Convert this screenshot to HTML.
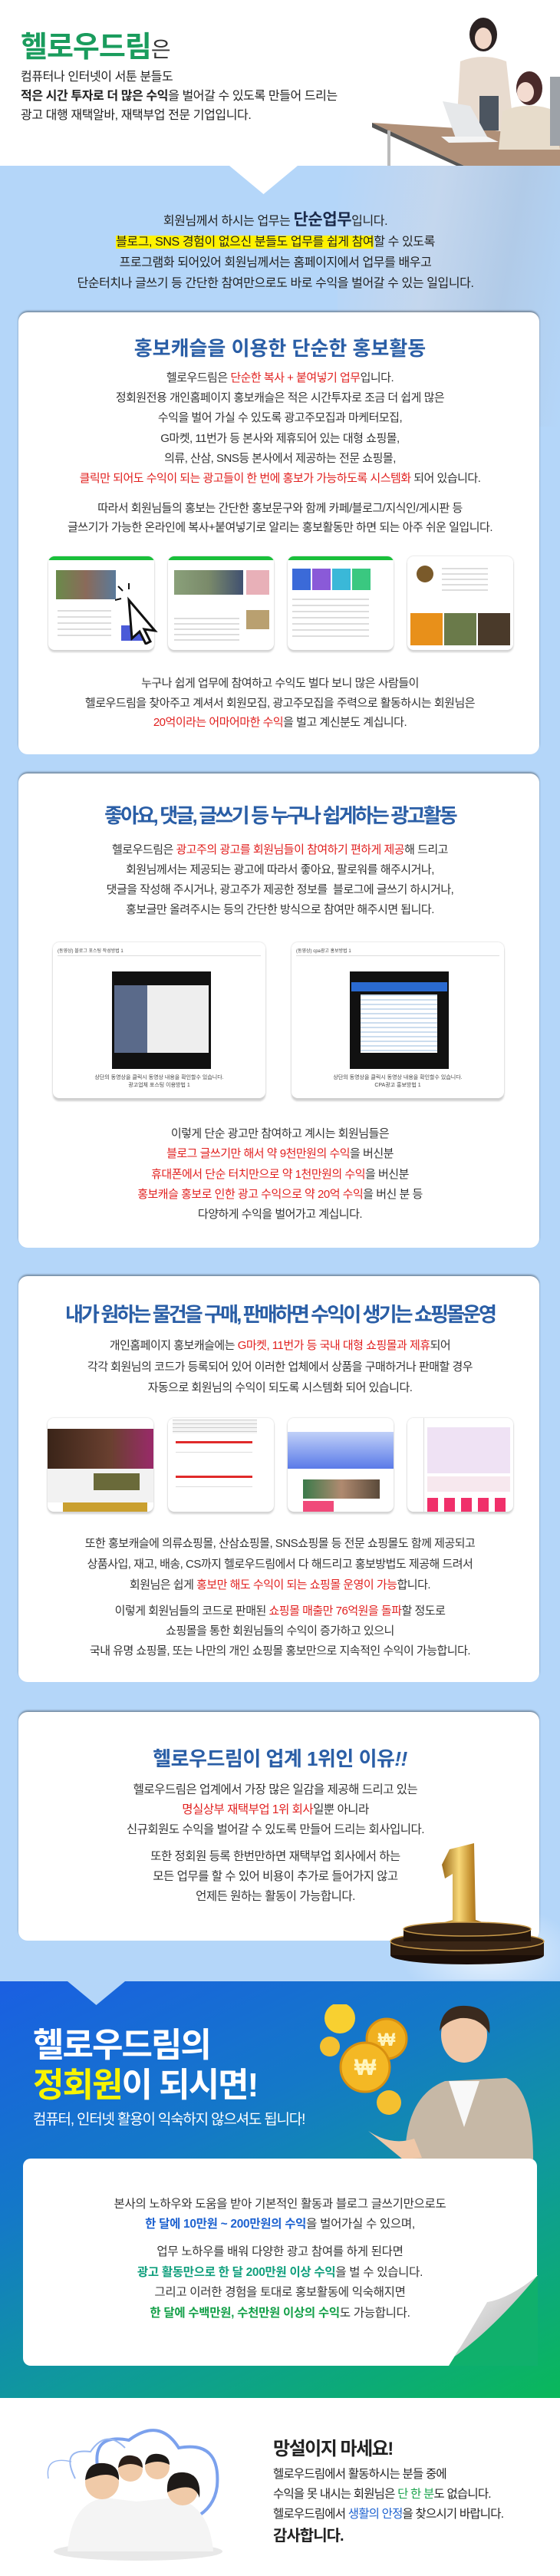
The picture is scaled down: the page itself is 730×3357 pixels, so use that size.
<!DOCTYPE html>
<html><head><meta charset="utf-8">
<style>
*{margin:0;padding:0;box-sizing:border-box}
body{width:730px;height:3357px;position:relative;background:#fff;font-family:"Liberation Sans","Noto Sans CJK KR",sans-serif;color:#222;overflow:hidden}
.a{position:absolute}
.c{position:absolute;left:0;width:730px;text-align:center;white-space:nowrap}
.r{color:#e1201f}
.card{position:absolute;left:24px;width:679px;background:#fff;border-radius:12px;box-shadow:0 -2px 2px rgba(0,0,0,.35)}
.t{font-size:26px;font-weight:bold;color:#2a5ea6;line-height:32px;letter-spacing:-1px}
.p{font-size:15px;letter-spacing:-0.5px;color:#333}
.shot{position:absolute;width:138px;height:122px;background:#fff;border-radius:8px;box-shadow:0 3px 2px #d4d4d4,0 0 2px #ccc;overflow:hidden}
.shot i{position:absolute;display:block}
</style></head><body>

<!-- top section -->
<div class="a" style="left:27px;top:39px;font-size:38px;font-weight:bold;color:#1a9c5d;letter-spacing:-1px;line-height:46px">헬로우드림<span style="color:#333;font-size:28px;font-weight:normal">은</span></div>
<div class="a" style="left:27px;top:88px;font-size:16px;line-height:25px;color:#222;letter-spacing:-0.4px">컴퓨터나 인터넷이 서툰 분들도<br><b>적은 시간 투자로 더 많은 수익</b>을 벌어갈 수 있도록 만들어 드리는<br>광고 대행 재택알바, 재택부업 전문 기업입니다.</div>

<!-- office image -->
<svg class="a" style="left:485px;top:20px" width="245" height="196" viewBox="0 0 245 196">
 <polygon points="0,140 160,150 245,160 245,196 120,196" fill="#b09078"/>
 <polygon points="0,140 120,196 110,196 0,146" fill="#555"/>
 <rect x="20" y="150" width="4" height="46" fill="#bbb"/>
 <ellipse cx="145" cy="25" rx="18" ry="22" fill="#2b2222"/>
 <ellipse cx="145" cy="30" rx="11" ry="14" fill="#f1d7c8"/>
 <path d="M115 60 Q145 48 175 60 L185 150 L110 150 Z" fill="#e8dbcf"/>
 <rect x="140" y="105" width="25" height="45" fill="#4c5560"/>
 <ellipse cx="205" cy="95" rx="17" ry="22" fill="#4a2a2a"/>
 <ellipse cx="200" cy="100" rx="11" ry="13" fill="#f3dbd0"/>
 <path d="M170 125 Q205 110 240 125 L245 175 L165 175 Z" fill="#e7dccb"/>
 <rect x="232" y="80" width="13" height="90" fill="#9da2a8"/>
 <polygon points="92,112 128,118 150,158 110,163" fill="#e6e8ea"/>
 <polygon points="90,158 150,158 165,165 100,166" fill="#f4f4f4"/>
</svg>

<!-- blue section -->
<div class="a" style="left:0;top:216px;width:730px;height:2366px;background:#b4d6f9"></div>
<div class="a" style="left:440px;top:216px;width:290px;height:340px;background:linear-gradient(100deg,rgba(180,214,249,0) 0%,rgba(200,215,235,.8) 40%,rgba(175,195,220,.6) 70%,rgba(180,214,249,0) 100%)"></div>
<svg class="a" style="left:299px;top:216px" width="89" height="37"><polygon points="0,0 89,0 44.5,37" fill="#fff"/></svg>

<div class="c" style="top:273px;font-size:16px;line-height:27px;color:#222;letter-spacing:-0.4px;left:-6px">
회원님께서 하시는 업무는 <b style="font-size:21px;color:#1b2a4a">단순업무</b>입니다.<br>
<span style="background:#fff200">블로그, SNS 경험이 없으신 분들도 업무를 쉽게 참여</span>할 수 있도록<br>
프로그램화 되어있어 회원님께서는 홈페이지에서 업무를 배우고<br>
단순터치나 글쓰기 등 간단한 참여만으로도 바로 수익을 벌어갈 수 있는 일입니다.</div>

<!-- card 1 -->
<div class="card" style="top:407px;height:576px"></div>
<div class="c t" style="top:438px;letter-spacing:0">홍보캐슬을 이용한 단순한 홍보활동</div>
<div class="c p" style="top:480px;line-height:26.2px">헬로우드림은 <span class="r">단순한 복사 + 붙여넣기 업무</span>입니다.<br>정회원전용 개인홈페이지 홍보캐슬은 적은 시간투자로 조금 더 쉽게 많은<br>수익을 벌어 가실 수 있도록 광고주모집과 마케터모집,<br>G마켓, 11번가 등 본사와 제휴되어 있는 대형 쇼핑몰,<br>의류, 산삼, SNS등 본사에서 제공하는 전문 쇼핑몰,<br><span class="r">클릭만 되어도 수익이 되는 광고들이 한 번에 홍보가 가능하도록 시스템화</span> 되어 있습니다.</div>
<div class="c p" style="top:650px;line-height:25px">따라서 회원님들의 홍보는 간단한 홍보문구와 함께 카페/블로그/지식인/게시판 등<br>글쓰기가 가능한 온라인에 복사+붙여넣기로 알리는 홍보활동만 하면 되는 아주 쉬운 일입니다.</div>

<div class="shot" style="left:63px;top:725px"><i style="left:0;top:0;width:138px;height:5px;background:#19c03a"></i><i style="left:10px;top:18px;width:78px;height:38px;background:linear-gradient(90deg,#6a8a4a,#8a6a5a,#5a7a9a)"></i><i style="left:12px;top:70px;width:70px;height:40px;background:repeating-linear-gradient(180deg,#ddd 0 2px,#fff 2px 8px)"></i><i style="left:95px;top:90px;width:30px;height:20px;background:#4a5ad8"></i></div>
<div class="shot" style="left:219px;top:725px"><i style="left:0;top:0;width:138px;height:5px;background:#19c03a"></i><i style="left:8px;top:18px;width:90px;height:32px;background:linear-gradient(90deg,#8aa07a,#7a8a6a,#405070)"></i><i style="left:102px;top:18px;width:30px;height:32px;background:#e8b0b8"></i><i style="left:102px;top:70px;width:30px;height:25px;background:#b9a070"></i><i style="left:8px;top:80px;width:85px;height:30px;background:repeating-linear-gradient(180deg,#ddd 0 2px,#fff 2px 7px)"></i></div>
<div class="shot" style="left:375px;top:725px"><i style="left:0;top:0;width:138px;height:5px;background:#19c03a"></i><i style="left:6px;top:16px;width:24px;height:28px;background:#3b6ad8"></i><i style="left:32px;top:16px;width:24px;height:28px;background:#8a5ad8"></i><i style="left:58px;top:16px;width:24px;height:28px;background:#3ab8d8"></i><i style="left:84px;top:16px;width:24px;height:28px;background:#3ac880"></i><i style="left:6px;top:55px;width:100px;height:50px;background:repeating-linear-gradient(180deg,#ddd 0 2px,#fff 2px 8px)"></i></div>
<div class="shot" style="left:531px;top:725px"><i style="left:12px;top:12px;width:22px;height:22px;border-radius:50%;background:#7a5a2a"></i><i style="left:45px;top:15px;width:60px;height:30px;background:repeating-linear-gradient(180deg,#ddd 0 2px,#fff 2px 7px)"></i><i style="left:4px;top:74px;width:42px;height:42px;background:#e8901a"></i><i style="left:48px;top:74px;width:42px;height:42px;background:#6a7a4a"></i><i style="left:92px;top:74px;width:42px;height:42px;background:#4a3a2a"></i></div>
<svg class="a" style="left:150px;top:760px" width="75" height="80"><path d="M18 22 L52 62 L38 60 L46 76 L40 79 L32 63 L22 72 Z" fill="#fff" stroke="#111" stroke-width="3"/><path d="M10 10 L4 4 M18 8 L18 0 M8 20 L0 22" stroke="#111" stroke-width="2"/></svg>

<div class="c p" style="top:878px;line-height:25.5px">누구나 쉽게 업무에 참여하고 수익도 벌다 보니 많은 사람들이<br>헬로우드림을 찾아주고 계셔서 회원모집, 광고주모집을 주력으로 활동하시는 회원님은<br><span class="r">20억이라는 어마어마한 수익</span>을 벌고 계신분도 계십니다.</div>

<!-- card 2 -->
<div class="card" style="top:1008px;height:618px"></div>
<div class="c t" style="top:1047px;letter-spacing:-2.8px">좋아요, 댓글, 글쓰기 등 누구나 쉽게하는 광고활동</div>
<div class="c p" style="top:1095px;line-height:26px">헬로우드림은 <span class="r">광고주의 광고를 회원님들이 참여하기 편하게 제공</span>해 드리고<br>회원님께서는 제공되는 광고에 따라서 좋아요, 팔로워를 해주시거나,<br>댓글을 작성해 주시거나, 광고주가 제공한 정보를 &nbsp;블로그에 글쓰기 하시거나,<br>홍보글만 올려주시는 등의 간단한 방식으로 참여만 해주시면 됩니다.</div>

<div class="a" style="left:69px;top:1228px;width:277px;height:203px;background:#fff;border-radius:8px;box-shadow:0 4px 2px #d0d0d0,0 0 2px #ccc">
 <div class="a" style="left:6px;top:6px;width:265px;height:12px;border-bottom:1px solid #ddd;font-size:6px;color:#444">(동영상) 블로그 포스팅 작성방법 1</div>
 <div class="a" style="left:77px;top:38px;width:129px;height:127px;background:#111"></div>
 <div class="a" style="left:80px;top:56px;width:123px;height:88px;background:linear-gradient(90deg,#5a6a8a 0 35%,#eee 35%)"></div>
 <div class="a" style="left:0;top:172px;width:277px;text-align:center;font-size:7px;color:#444;line-height:10px">상단의 동영상을 클릭시 동영상 내용을 확인할수 있습니다.<br>광고업체 포스팅 이용방법 1</div>
</div>
<div class="a" style="left:380px;top:1228px;width:277px;height:203px;background:#fff;border-radius:8px;box-shadow:0 4px 2px #d0d0d0,0 0 2px #ccc">
 <div class="a" style="left:6px;top:6px;width:265px;height:12px;border-bottom:1px solid #ddd;font-size:6px;color:#444">(동영상) cpa광고 홍보방법 1</div>
 <div class="a" style="left:76px;top:38px;width:129px;height:127px;background:#111"></div>
 <div class="a" style="left:78px;top:52px;width:125px;height:12px;background:#2a6ad0"></div>
 <div class="a" style="left:90px;top:68px;width:100px;height:76px;background:repeating-linear-gradient(180deg,#cde 0 2px,#fff 2px 6px)"></div>
 <div class="a" style="left:0;top:172px;width:277px;text-align:center;font-size:7px;color:#444;line-height:10px">상단의 동영상을 클릭시 동영상 내용을 확인할수 있습니다.<br>CPA광고 홍보방법 1</div>
</div>

<div class="c p" style="top:1465px;line-height:26.3px">이렇게 단순 광고만 참여하고 계시는 회원님들은<br><span class="r">블로그 글쓰기만 해서 약 9천만원의 수익</span>을 버신분<br><span class="r">휴대폰에서 단순 터치만으로 약 1천만원의 수익</span>을 버신분<br><span class="r">홍보캐슬 홍보로 인한 광고 수익으로 약 20억 수익</span>을 버신 분 등<br>다양하게 수익을 벌어가고 계십니다.</div>

<!-- card 3 -->
<div class="card" style="top:1663px;height:529px"></div>
<div class="c t" style="top:1697px;letter-spacing:-2.9px">내가 원하는 물건을 구매, 판매하면 수익이 생기는 쇼핑몰운영</div>
<div class="c p" style="top:1740px;line-height:27.5px">개인홈페이지 홍보캐슬에는 <span class="r">G마켓, 11번가 등 국내 대형 쇼핑몰과 제휴</span>되어<br>각각 회원님의 코드가 등록되어 있어 이러한 업체에서 상품을 구매하거나 판매할 경우<br>자동으로 회원님의 수익이 되도록 시스템화 되어 있습니다.</div>

<div class="shot" style="left:62px;top:1848px"><i style="left:0;top:14px;width:138px;height:52px;background:linear-gradient(90deg,#3a2418,#6a4030 60%,#9a2a6a)"></i><i style="left:0;top:66px;width:138px;height:44px;background:#f2f2f2"></i><i style="left:60px;top:72px;width:60px;height:22px;background:#6a6a3a"></i><i style="left:20px;top:110px;width:110px;height:12px;background:#caa030"></i></div>
<div class="shot" style="left:219px;top:1848px"><i style="left:6px;top:2px;width:110px;height:18px;background:repeating-linear-gradient(180deg,#ccc 0 1px,#f4f4f4 1px 5px)"></i><i style="left:10px;top:30px;width:100px;height:88px;background:repeating-linear-gradient(180deg,#e02a2a 0 3px,#fff 3px 14px,#ddd 14px 15px,#fff 15px 45px)"></i></div>
<div class="shot" style="left:375px;top:1848px"><i style="left:0;top:18px;width:138px;height:48px;background:linear-gradient(180deg,#c0d0f8,#5a7ae8)"></i><i style="left:20px;top:80px;width:100px;height:25px;background:linear-gradient(90deg,#3a7a4a,#b08a70,#5a4a3a)"></i><i style="left:20px;top:108px;width:40px;height:14px;background:#f04a7a"></i></div>
<div class="shot" style="left:531px;top:1848px"><i style="left:2px;top:0;width:20px;height:122px;background:#fff;border-right:1px solid #ddd"></i><i style="left:26px;top:12px;width:108px;height:60px;background:#efe2f4"></i><i style="left:26px;top:76px;width:108px;height:20px;background:#f7e8ee"></i><i style="left:26px;top:104px;width:108px;height:18px;background:repeating-linear-gradient(90deg,#f0306a 0 14px,#fff 14px 22px)"></i></div>

<div class="c p" style="top:1998px;line-height:27px">또한 홍보캐슬에 의류쇼핑몰, 산삼쇼핑몰, SNS쇼핑몰 등 전문 쇼핑몰도 함께 제공되고<br>상품사입, 재고, 배송, CS까지 헬로우드림에서 다 해드리고 홍보방법도 제공해 드려서<br>회원님은 쉽게 <span class="r">홍보만 해도 수익이 되는 쇼핑몰 운영이 가능</span>합니다.</div>
<div class="c p" style="top:2087px;line-height:26px">이렇게 회원님들의 코드로 판매된 <span class="r">쇼핑몰 매출만 76억원을 돌파</span>할 정도로<br>쇼핑몰을 통한 회원님들의 수익이 증가하고 있으니<br>국내 유명 쇼핑몰, 또는 나만의 개인 쇼핑몰 홍보만으로 지속적인 수익이 가능합니다.</div>

<!-- card 4 -->
<div class="card" style="top:2231px;height:298px"></div>
<div class="c t" style="top:2276px;letter-spacing:-0.5px">헬로우드림이 업계 1위인 이유<i>!!</i></div>
<div class="c p" style="top:2320px;line-height:26px;left:-6px;font-size:15.5px">헬로우드림은 업계에서 가장 많은 일감을 제공해 드리고 있는<br><span class="r">명실상부 재택부업 1위 회사</span>일뿐 아니라<br>신규회원도 수익을 벌어갈 수 있도록 만들어 드리는 회사입니다.</div>
<div class="c p" style="top:2407px;line-height:26px;left:-6px;font-size:15.5px">또한 정회원 등록 한번만하면 재택부업 회사에서 하는<br>모든 업무를 할 수 있어 비용이 추가로 들어가지 않고<br>언제든 원하는 활동이 가능합니다.</div>

<!-- trophy -->
<div class="a" style="left:500px;top:2470px;width:230px;height:110px;background:radial-gradient(ellipse at 60% 70%,rgba(255,255,255,.7),rgba(255,255,255,0) 60%)"></div>
<svg class="a" style="left:508px;top:2402px" width="202" height="158">
 <defs><linearGradient id="g" x1="0" x2="1"><stop offset="0" stop-color="#9a6a1a"/><stop offset=".4" stop-color="#f8d878"/><stop offset=".7" stop-color="#c08a2a"/><stop offset="1" stop-color="#7a4a10"/></linearGradient></defs>
 <path d="M78 8 L110 0 L112 100 L124 104 L124 114 L68 114 L68 104 L82 100 L82 40 L72 46 L68 28 Z" fill="url(#g)"/>
 <ellipse cx="101" cy="146" rx="100" ry="12" fill="#1a0e08"/>
 <rect x="1" y="128" width="200" height="18" fill="#2a1a0e"/>
 <ellipse cx="101" cy="128" rx="100" ry="12" fill="#3a2616" stroke="#c89a4a" stroke-width="1.5"/>
 <rect x="18" y="112" width="166" height="16" fill="#24160c"/>
 <ellipse cx="101" cy="112" rx="83" ry="9" fill="#3a2616" stroke="#c89a4a" stroke-width="1.5"/>
</svg>

<!-- gradient section -->
<div class="a" style="left:0;top:2582px;width:730px;height:543px;background:linear-gradient(155deg,#1a5fe2 0%,#1478c8 35%,#0f9a9a 65%,#0ab85a 100%)"></div>
<svg class="a" style="left:88px;top:2582px" width="75" height="31"><polygon points="0,0 75,0 37.5,31" fill="#b4d6f9"/></svg>
<div class="a" style="left:43px;top:2640px;font-size:44px;font-weight:bold;color:#fff;line-height:52px;letter-spacing:-2px">헬로우드림의<br><span style="color:#f8f400">정회원</span>이 되시면!</div>
<div class="a" style="left:43px;top:2750px;font-size:19px;color:#fff;letter-spacing:-1.2px;line-height:26px">컴퓨터, 인터넷 활용이 익숙하지 않으셔도 됩니다!</div>

<!-- man & coins -->
<svg class="a" style="left:410px;top:2612px" width="290" height="202">
 <path d="M118 202 Q118 120 170 100 L250 96 Q285 110 285 202 Z" fill="#c6b8a6"/>
 <path d="M175 100 L195 160 L215 100 Z" fill="#f8f8f8"/>
 <ellipse cx="195" cy="40" rx="30" ry="36" fill="#f0c8a8"/>
 <path d="M163 35 Q165 0 198 2 Q232 4 228 38 Q215 16 190 18 Q170 22 163 35 Z" fill="#3a2a1e"/>
 <path d="M70 165 Q100 185 130 175 L140 200 L115 202 Z" fill="#f0c8a8"/>
 <circle cx="33" cy="18" r="20" fill="#f8d030"/>
 <circle cx="94" cy="45" r="26" fill="#f0b020" stroke="#d89010" stroke-width="3"/>
 <circle cx="66" cy="82" r="32" fill="#f4b824" stroke="#d89010" stroke-width="3"/>
 <circle cx="20" cy="55" r="13" fill="#f4c030"/>
 <circle cx="97" cy="128" r="16" fill="#f4c030"/>
 <text x="66" y="92" text-anchor="middle" font-size="30" font-weight="bold" fill="#fff6c0" font-family="Liberation Sans,sans-serif">₩</text>
 <text x="94" y="54" text-anchor="middle" font-size="24" font-weight="bold" fill="#fff6c0" font-family="Liberation Sans,sans-serif">₩</text>
</svg>

<!-- white note -->
<div class="a" style="left:30px;top:2813px;width:670px;height:270px;background:#fff;border-radius:10px 10px 0 10px"></div>
<svg class="a" style="left:575px;top:2965px" width="126" height="118"><defs><linearGradient id="cg" x1="0" y1="0" x2="1" y2="1"><stop offset="0" stop-color="#fff"/><stop offset=".6" stop-color="#c8c8c8"/><stop offset="1" stop-color="#888"/></linearGradient></defs><polygon points="126,0 126,118 0,118" fill="#10b06c"/><path d="M126 0 Q90 30 60 35 Q40 70 10 118 L0 118 Q60 80 126 0Z" fill="url(#cg)"/><path d="M60 35 Q40 70 10 118 L0 118 L0 0 L126 0 Q90 30 60 35Z" fill="#fff"/></svg>
<div class="c" style="top:2860px;font-size:15.5px;line-height:26px;color:#333;letter-spacing:-0.3px">본사의 노하우와 도움을 받아 기본적인 활동과 블로그 글쓰기만으로도<br><b style="color:#1e62d0">한 달에 10만원 ~ 200만원의 수익</b>을 벌어가실 수 있으며,</div>
<div class="c" style="top:2922px;font-size:15.5px;line-height:26.7px;color:#333;letter-spacing:-0.3px">업무 노하우를 배워 다양한 광고 참여를 하게 된다면<br><b style="color:#12a07e">광고 활동만으로 한 달 200만원 이상 수익</b>을 벌 수 있습니다.<br>그리고 이러한 경험을 토대로 홍보활동에 익숙해지면<br><b style="color:#16a04a">한 달에 수백만원, 수천만원 이상의 수익</b>도 가능합니다.</div>

<!-- family -->
<svg class="a" style="left:58px;top:3160px" width="245" height="180">
 <path d="M70 60 Q60 10 110 20 Q150 -10 175 30 Q230 20 225 80 Q220 120 170 130" fill="none" stroke="#5a8ae8" stroke-width="4" opacity=".8"/>
 <path d="M40 70 Q20 30 60 35 Q80 5 105 30" fill="none" stroke="#9ab8f0" stroke-width="2"/>
 <path d="M5 70 Q0 40 35 48" fill="none" stroke="#9ab8f0" stroke-width="1.5"/>
 <ellipse cx="122" cy="165" rx="110" ry="12" fill="#e8e8e8"/>
 <path d="M30 165 Q35 100 80 95 L120 100 L170 95 Q215 105 220 165 Z" fill="#f4f4f4"/>
 <circle cx="75" cy="75" r="22" fill="#f0caa8"/><path d="M53 72 Q55 48 78 50 Q98 52 97 72 Q85 58 53 72Z" fill="#1e1a18"/>
 <circle cx="112" cy="58" r="16" fill="#f0caa8"/><path d="M96 56 Q98 38 114 40 Q128 42 128 56 Q112 46 96 56Z" fill="#2a1e18"/>
 <circle cx="147" cy="55" r="16" fill="#f0caa8"/><path d="M131 52 Q133 36 149 38 Q163 40 163 52 Q148 44 131 52Z" fill="#1e1a18"/>
 <circle cx="180" cy="85" r="20" fill="#f0caa8"/><path d="M160 88 Q158 60 182 62 Q205 64 202 95 Q195 72 160 88Z" fill="#1e1a18"/>
</svg>
<div class="a" style="left:356px;top:3177px;font-size:24px;font-weight:bold;color:#222;letter-spacing:-1.5px;line-height:30px">망설이지 마세요!</div>
<div class="a" style="left:356px;top:3212px;font-size:15.5px;color:#222;letter-spacing:-0.8px;line-height:26px">헬로우드림에서 활동하시는 분들 중에<br>수익을 못 내시는 회원님은 <span style="color:#17a24a">단 한 분</span>도 없습니다.<br>헬로우드림에서 <span style="color:#1e62d0">생활의 안정</span>을 찾으시기 바랍니다.</div>
<div class="a" style="left:356px;top:3291px;font-size:20px;font-weight:bold;color:#222;letter-spacing:-1px;line-height:28px">감사합니다.</div>

</body></html>
